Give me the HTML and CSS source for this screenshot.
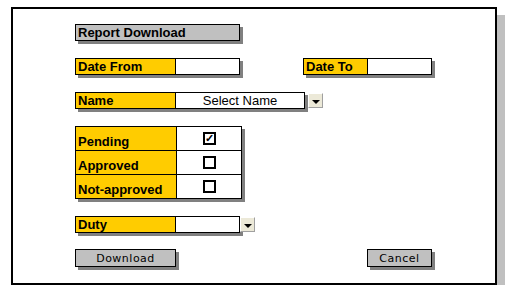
FILE: index.html
```html
<!DOCTYPE html>
<html lang="en">
<head>
<meta charset="UTF-8">
<title>Report Download</title>
<link rel="stylesheet" href="styles.css">
</head>
<body>
  <div class="panel">
    <div class="title">Report Download</div>

    <div class="row">
      <div class="field">
        <span class="label">Date From</span>
        <span class="input"></span>
      </div>
      <div class="field field-to">
        <span class="label label-short">Date To</span>
        <span class="input input-to"></span>
      </div>
    </div>

    <div class="row">
      <div class="field">
        <span class="label">Name</span>
        <span class="input input-select">Select Name</span>
      </div>
      <span class="drop"><span class="arrow"></span></span>
    </div>

    <div class="status">
      <span class="label cell">Pending</span>
      <span class="box"><span class="check checked">&#10003;</span></span>
      <span class="label cell">Approved</span>
      <span class="box"><span class="check"></span></span>
      <span class="label cell">Not-approved</span>
      <span class="box"><span class="check"></span></span>
    </div>

    <div class="row">
      <div class="field">
        <span class="label">Duty</span>
        <span class="input"></span>
      </div>
      <span class="drop drop-duty"><span class="arrow"></span></span>
    </div>

    <div class="buttons">
      <button class="btn btn-download">Download</button>
      <button class="btn btn-cancel">Cancel</button>
    </div>
  </div>
</body>
</html>
```

FILE: styles.css
```css
body {
    margin: 0;
    background: #fff;
    font-family: "Liberation Sans", Arial, sans-serif;
}

.panel {
    box-sizing: border-box;
    width: 486px;
    height: 278px;
    margin: 7px 0 0 11px;
    border: 2px solid #000;
    background: #fff;
    box-shadow: 8px 8px 0 #c0c0c0;
    padding: 15px 0 0 62px;
    display: flex;
    flex-direction: column;
    align-items: flex-start;
    gap: 17px;
}

.title {
    box-sizing: border-box;
    width: 165px;
    height: 17px;
    border: 1px solid #000;
    background: #c0c0c0;
    box-shadow: 3px 3px 0 #808080;
    font-weight: bold;
    font-size: 13px;
    line-height: 15px;
    padding-left: 2px;
}

.row {
    display: flex;
    align-items: center;
}

.field {
    display: flex;
    height: 17px;
    box-sizing: border-box;
    border: 1px solid #000;
    box-shadow: 3px 3px 0 #808080;
}

.field-to {
    margin-left: 63px;
}

.label {
    box-sizing: border-box;
    width: 100px;
    background: #ffcc00;
    border-right: 1px solid #000;
    font-weight: bold;
    font-size: 13px;
    line-height: 16px;
    padding-left: 2px;
}

.label-short {
    width: 64px;
}

.input {
    width: 63px;
    background: #fff;
}

.input-to {
    width: 63px;
}

.input-select {
    width: 128px;
    text-align: center;
    font-size: 13px;
    line-height: 16px;
}

.drop {
    box-sizing: border-box;
    width: 15px;
    height: 15px;
    margin-left: 3px;
    background: #ece9d8;
    border: 1px solid;
    border-color: #fff #a0a0a0 #a0a0a0 #fff;
    display: flex;
    align-items: center;
    justify-content: center;
}

.drop-duty {
    margin-left: 0;
}

.arrow {
    width: 0;
    height: 0;
    border-left: 4px solid transparent;
    border-right: 4px solid transparent;
    border-top: 4px solid #000;
    margin-top: 2px;
}

.status {
    display: grid;
    grid-template-columns: 101px 64px;
    grid-auto-rows: 24px;
    border: 1px solid #000;
    border-bottom: none;
    box-shadow: 3px 3px 0 #808080;
}

.status > span {
    border-bottom: 1px solid #000;
}

.cell {
    width: auto;
    line-height: 30px;
    overflow: hidden;
}

.box {
    background: #fff;
    display: flex;
    align-items: center;
    justify-content: center;
}

.check {
    box-sizing: border-box;
    width: 13px;
    height: 13px;
    border: 2px solid #000;
    font-size: 11px;
    line-height: 9px;
    font-weight: bold;
    text-align: center;
    color: #000;
}

.buttons {
    display: flex;
    justify-content: space-between;
    width: 357px;
    margin-top: -1px;
}

.btn {
    box-sizing: border-box;
    height: 18px;
    padding: 0;
    border: 1px solid #000;
    background: #c0c0c0;
    box-shadow: 3px 3px 0 #808080;
    font-family: "DejaVu Sans", Verdana, sans-serif;
    font-size: 11px;
    letter-spacing: 0.5px;
    color: #000;
}

.btn-download {
    width: 101px;
}

.btn-cancel {
    width: 65px;
}
```
